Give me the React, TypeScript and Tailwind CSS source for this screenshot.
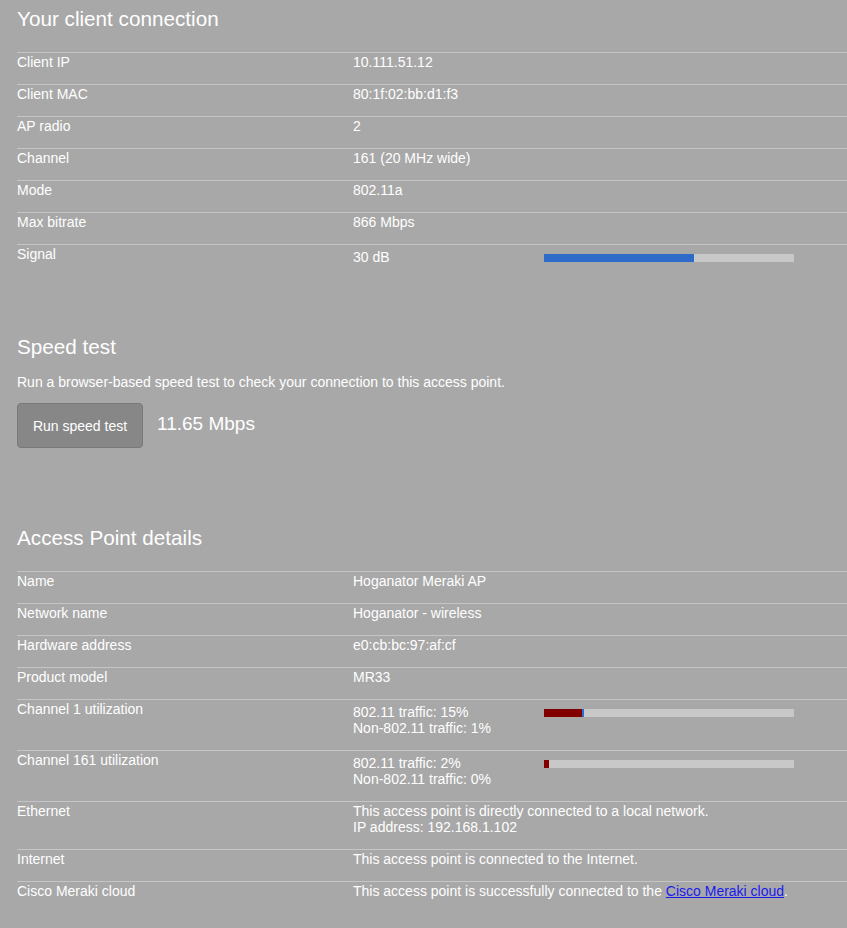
import React from "react";

type RowProps = { label: string; children: React.ReactNode; tall?: boolean };

function Row({ label, children, tall }: RowProps) {
  return (
    <div className="flex border-t border-[#c5c5c5] text-[14px] leading-[16px]">
      <div className="w-[336px] shrink-0 pt-[1px] pb-[14px]">{label}</div>
      <div className={tall ? "flex-1 pt-[4px] pb-[14px]" : "flex-1 pt-[1px] pb-[14px]"}>{children}</div>
    </div>
  );
}

function BarValue({ lines, segs }: { lines: string[]; segs: { w: number; c: string }[] }) {
  return (
    <div className="flex items-start">
      <div className="w-[191px] shrink-0">
        {lines.map((l) => (
          <div key={l}>{l}</div>
        ))}
      </div>
      <div className="mt-[5px] flex h-[8px] w-[250px] bg-[#c8c8c8]">
        {segs.map((s, i) => (
          <div key={i} className="h-full" style={{ width: s.w, backgroundColor: s.c }} />
        ))}
      </div>
    </div>
  );
}

export default function App() {
  return (
    <div className="min-h-[928px] bg-[#a8a8a8] pl-[17px] text-white font-['Liberation_Sans',Arial,sans-serif]">
      <h2 className="pt-[7px] text-[20.7px] leading-[24px] font-normal">Your client connection</h2>
      <div className="mt-[21px]">
        <Row label="Client IP">10.111.51.12</Row>
        <Row label="Client MAC">80:1f:02:bb:d1:f3</Row>
        <Row label="AP radio">2</Row>
        <Row label="Channel">161 (20 MHz wide)</Row>
        <Row label="Mode">802.11a</Row>
        <Row label="Max bitrate">866 Mbps</Row>
        <Row label="Signal" tall>
          <BarValue lines={["30 dB"]} segs={[{ w: 150, c: "#2e6bc8" }]} />
        </Row>
      </div>

      <h2 className="mt-[56px] text-[20.7px] leading-[24px] font-normal">Speed test</h2>
      <p className="mt-[15px] text-[14px] leading-[16px]">
        Run a browser-based speed test to check your connection to this access point.
      </p>
      <div className="mt-[13px] flex items-center">
        <button className="h-[45px] w-[126px] rounded-[4px] border border-[#787878] bg-[#878787] text-[14px] leading-[16px] text-white">
          Run speed test
        </button>
        <span className="ml-[14px] -mt-[3px] text-[19px] leading-[22px]">11.65 Mbps</span>
      </div>

      <h2 className="mt-[78px] text-[20.7px] leading-[24px] font-normal">Access Point details</h2>
      <div className="mt-[21px]">
        <Row label="Name">Hoganator Meraki AP</Row>
        <Row label="Network name">Hoganator - wireless</Row>
        <Row label="Hardware address">e0:cb:bc:97:af:cf</Row>
        <Row label="Product model">MR33</Row>
        <Row label="Channel 1 utilization" tall>
          <BarValue
            lines={["802.11 traffic: 15%", "Non-802.11 traffic: 1%"]}
            segs={[
              { w: 37.5, c: "#800000" },
              { w: 2.5, c: "#2e6bc8" },
            ]}
          />
        </Row>
        <Row label="Channel 161 utilization" tall>
          <BarValue
            lines={["802.11 traffic: 2%", "Non-802.11 traffic: 0%"]}
            segs={[{ w: 5, c: "#800000" }]}
          />
        </Row>
        <Row label="Ethernet">
          <div>This access point is directly connected to a local network.</div>
          <div>IP address: 192.168.1.102</div>
        </Row>
        <Row label="Internet">This access point is connected to the Internet.</Row>
        <Row label="Cisco Meraki cloud">
          This access point is successfully connected to the{" "}
          <a href="#" className="text-[#1a1aee] underline">
            Cisco Meraki cloud
          </a>
          .
        </Row>
      </div>
    </div>
  );
}
